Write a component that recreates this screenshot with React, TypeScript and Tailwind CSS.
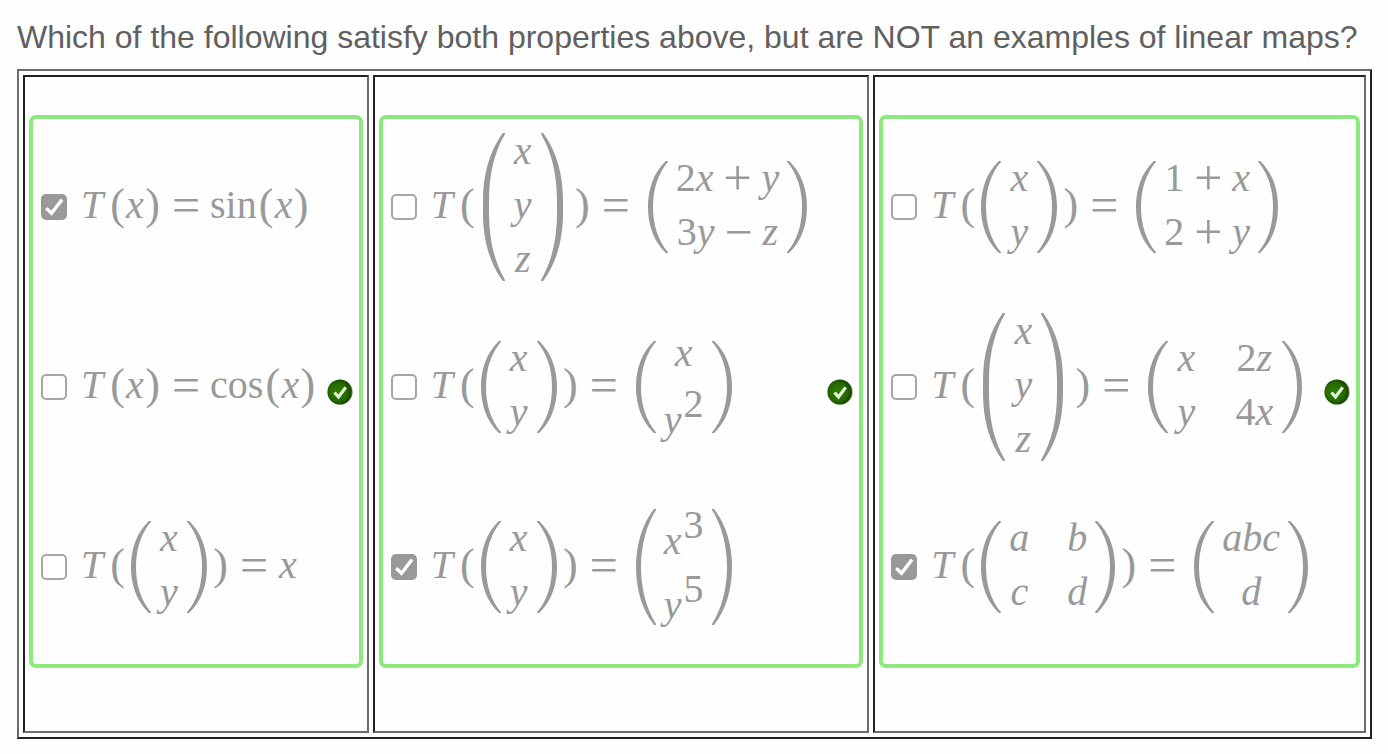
import React from "react";

/* ---------- math primitives ---------- */

function Italic({ children }: { children: React.ReactNode }) {
  return <span className="pb-1 italic">{children}</span>;
}

function Digit({ children }: { children: React.ReactNode }) {
  return <span className="pb-1">{children}</span>;
}

function Variable({ children }: { children: React.ReactNode }) {
  return <span className="w-5 pb-1 text-center italic">{children}</span>;
}

function Paren({ children }: { children: string }) {
  return <span className="w-[15px] pb-1 text-center text-[44px]">{children}</span>;
}

function Operator({ children }: { children: string }) {
  return <span className="flex w-7 justify-center pb-1 text-[50px]">{children}</span>;
}

function Equals() {
  return (
    <span className="ml-3 flex">
      <Operator>=</Operator>
    </span>
  );
}

function FunctionName({ children }: { children: string }) {
  return <span className="mr-0.5 ml-2.5 pb-1">{children}</span>;
}

function Sum({ left, op, right }: { left: React.ReactNode; op: string; right: React.ReactNode }) {
  return (
    <span className="flex items-center gap-2.5">
      <span className="flex">{left}</span>
      <Operator>{op}</Operator>
      {right}
    </span>
  );
}

function Power({ base, exp }: { base: string; exp: string }) {
  return (
    <span className="flex items-end gap-0.5">
      <Italic>{base}</Italic>
      <span className="pb-5">{exp}</span>
    </span>
  );
}

type Size = "short" | "medium" | "tall";

const fenceBox: Record<Size, string> = {
  short: "h-[92px] w-5",
  medium: "h-[116px] w-5",
  tall: "h-[148px] w-[22px]",
};

const fencePath: Record<Size, string> = {
  short: "M17.8 0C5.5 12 0 28 0 46s5.500 34 17.800 46H20v-.8C10 79.500 5 64 5 46S10 12.500 20 .8V0z",
  medium: "M18 0C6 15 0 36 0 58s6 43 18 58h2v-1C10.500 100 5 80 5 58S10.500 16 20 1V0z",
  tall: "M19.800 0C6 19 0 42 0 68v12c0 26 6 49 19.800 68H22v-1C11 128 6 106 6 80V68C6 42 11 20 22 1V0z",
};

const fenceView: Record<Size, string> = {
  short: "0 0 20 92",
  medium: "0 0 20 116",
  tall: "0 0 22 148",
};

function Fence({ size, side }: { size: Size; side: "left" | "right" }) {
  return (
    <svg
      viewBox={fenceView[size]}
      className={`${fenceBox[size]} shrink-0 ${side === "right" ? "-scale-x-100" : ""}`}
      fill="currentColor"
      aria-hidden="true"
    >
      <path d={fencePath[size]} />
    </svg>
  );
}

function Matrix({ size = "short", rows }: { size?: Size; rows: React.ReactNode[][] }) {
  const twoColumns = rows[0].length === 2;
  return (
    <span className={`flex items-center gap-2 ${size === "tall" ? "mr-3 ml-2" : "mx-[6px]"}`}>
      <Fence size={size} side="left" />
      <span className={twoColumns ? "grid grid-cols-[auto_auto] gap-x-[38px]" : "grid grid-cols-[auto]"}>
        {rows.flat().map((cell, i) => (
          <span key={i} className="flex min-h-[54px] items-center justify-center">
            {cell}
          </span>
        ))}
      </span>
      <Fence size={size} side="right" />
    </span>
  );
}

function RaisedCell({ children }: { children: React.ReactNode }) {
  return <span className="flex h-16 items-end pb-0.5">{children}</span>;
}

function Term({ factor, name }: { factor: string; name: string }) {
  return (
    <span className="flex w-10 justify-center">
      <Digit>{factor}</Digit>
      <Italic>{name}</Italic>
    </span>
  );
}

function MapOf({ children }: { children: React.ReactNode }) {
  return (
    <>
      <span className="w-[29px] pb-1 italic">T</span>
      <Paren>(</Paren>
      {children}
      <Paren>)</Paren>
      <Equals />
    </>
  );
}

const X = <Variable>x</Variable>;
const Y = <Variable>y</Variable>;
const Z = <Variable>z</Variable>;

/* ---------- question content ---------- */

type Choice = { id: string; checked: boolean; math: React.ReactNode };

const trig = (name: string) => (
  <>
    <MapOf>{X}</MapOf>
    <FunctionName>{name}</FunctionName>
    <Paren>(</Paren>
    {X}
    <Paren>)</Paren>
  </>
);

const vectorXY = <Matrix rows={[[X], [Y]]} />;
const vectorXYZ = <Matrix size="tall" rows={[[X], [Y], [Z]]} />;

const gap = <span className="w-3" />;

const groups: { width: string; choices: Choice[] }[] = [
  {
    width: "w-[25.9%]",
    choices: [
      { id: "sin", checked: true, math: trig("sin") },
      { id: "cos", checked: false, math: trig("cos") },
      {
        id: "proj",
        checked: false,
        math: (
          <>
            <MapOf>{vectorXY}</MapOf>
            <span className="ml-2.5 flex">{X}</span>
          </>
        ),
      },
    ],
  },
  {
    width: "w-[37.2%]",
    choices: [
      {
        id: "linear",
        checked: false,
        math: (
          <>
            <MapOf>{vectorXYZ}</MapOf>
            {gap}
            <Matrix
              rows={[
                [<Sum left={<><Digit>2</Digit><Italic>x</Italic></>} op="+" right={<Italic>y</Italic>} />],
                [<Sum left={<><Digit>3</Digit><Italic>y</Italic></>} op="−" right={<Italic>z</Italic>} />],
              ]}
            />
          </>
        ),
      },
      {
        id: "square",
        checked: false,
        math: (
          <>
            <MapOf>{vectorXY}</MapOf>
            {gap}
            <Matrix rows={[[X], [<RaisedCell><Power base="y" exp="2" /></RaisedCell>]]} />
          </>
        ),
      },
      {
        id: "powers",
        checked: true,
        math: (
          <>
            <MapOf>{vectorXY}</MapOf>
            {gap}
            <Matrix
              size="medium"
              rows={[
                [<RaisedCell><Power base="x" exp="3" /></RaisedCell>],
                [<RaisedCell><Power base="y" exp="5" /></RaisedCell>],
              ]}
            />
          </>
        ),
      },
    ],
  },
  {
    width: "w-[36.9%]",
    choices: [
      {
        id: "affine",
        checked: false,
        math: (
          <>
            <MapOf>{vectorXY}</MapOf>
            {gap}
            <Matrix
              rows={[
                [<Sum left={<Digit>1</Digit>} op="+" right={<Italic>x</Italic>} />],
                [<Sum left={<Digit>2</Digit>} op="+" right={<Italic>y</Italic>} />],
              ]}
            />
          </>
        ),
      },
      {
        id: "matrix",
        checked: false,
        math: (
          <>
            <MapOf>{vectorXYZ}</MapOf>
            {gap}
            <Matrix
              rows={[
                [X, <Term factor="2" name="z" />],
                [Y, <Term factor="4" name="x" />],
              ]}
            />
          </>
        ),
      },
      {
        id: "abcd",
        checked: true,
        math: (
          <>
            <MapOf>
              <Matrix
                rows={[
                  [<Variable>a</Variable>, <Variable>b</Variable>],
                  [<Variable>c</Variable>, <Variable>d</Variable>],
                ]}
              />
            </MapOf>
            {gap}
            <Matrix rows={[[<Italic>abc</Italic>], [<Italic>d</Italic>]]} />
          </>
        ),
      },
    ],
  },
];

/* ---------- page ---------- */

function Checkbox({ id, checked }: { id: string; checked: boolean }) {
  return (
    <span className="grid size-[26px] shrink-0">
      <input
        type="checkbox"
        id={id}
        defaultChecked={checked}
        className="peer col-start-1 row-start-1 size-[26px] appearance-none rounded-[5px] border-2 border-[#a6a6a6] bg-white checked:border-[#999] checked:bg-[#999]"
      />
      <svg
        viewBox="0 0 26 26"
        className="pointer-events-none invisible col-start-1 row-start-1 size-[26px] peer-checked:visible"
        fill="none"
        stroke="#fff"
        strokeWidth="3.4"
        aria-hidden="true"
      >
        <path d="M5.200 14.200l5.300 5.100L21 5.600" />
      </svg>
    </span>
  );
}

function CorrectIcon() {
  return (
    <svg viewBox="0 0 26 26" className="mr-[6px] size-[26px] shrink-0" role="img" aria-label="Correct">
      <defs>
        <radialGradient id="badge" cx="0.42" cy="0.5" r="0.58">
          <stop offset="0" stopColor="#2f7d00" />
          <stop offset="0.6" stopColor="#276b00" />
          <stop offset="0.88" stopColor="#184600" />
          <stop offset="1" stopColor="#5f9145" />
        </radialGradient>
      </defs>
      <circle cx="13" cy="13" r="12.6" fill="url(#badge)" />
      <path d="M7.500 13.500l4 4.500 7.200-9.600" fill="none" stroke="#e2f3d8" strokeWidth="3.2" />
    </svg>
  );
}

export default function App() {
  return (
    <main className="min-h-screen bg-[#fefefe] pt-[17px] pr-4 pl-[17px]">
      <h1 className="mb-3 font-['Liberation_Sans',sans-serif] text-[32px] leading-10 whitespace-nowrap text-[#606060]">
        Which of the following satisfy both properties above, but are NOT an examples of linear maps?
      </h1>
      <table className="w-full table-fixed border-separate border-spacing-1 border-2 border-t-[#6c6c6c] border-r-[#222] border-b-[#222] border-l-[#6c6c6c]">
        <tbody>
          <tr>
            {groups.map((group, g) => (
              <td
                key={g}
                className={`${group.width} border-2 border-t-[#222] border-r-[#6c6c6c] border-b-[#6c6c6c] border-l-[#222] px-1 pt-[38px] pb-[63px] align-top`}
              >
                <div className="flex items-center justify-between rounded-[7px] border-4 border-[#8de87e] pl-2">
                  <div className="flex flex-col pb-[5px]">
                    {group.choices.map((choice) => (
                      <div key={choice.id} className="flex h-[180px] items-center gap-3.5 pb-1">
                        <Checkbox id={choice.id} checked={choice.checked} />
                        <label
                          htmlFor={choice.id}
                          className="flex items-center font-['Liberation_Serif',serif] text-[40px] leading-none text-[#999]"
                        >
                          {choice.math}
                        </label>
                      </div>
                    ))}
                  </div>
                  <CorrectIcon />
                </div>
              </td>
            ))}
          </tr>
        </tbody>
      </table>
    </main>
  );
}
